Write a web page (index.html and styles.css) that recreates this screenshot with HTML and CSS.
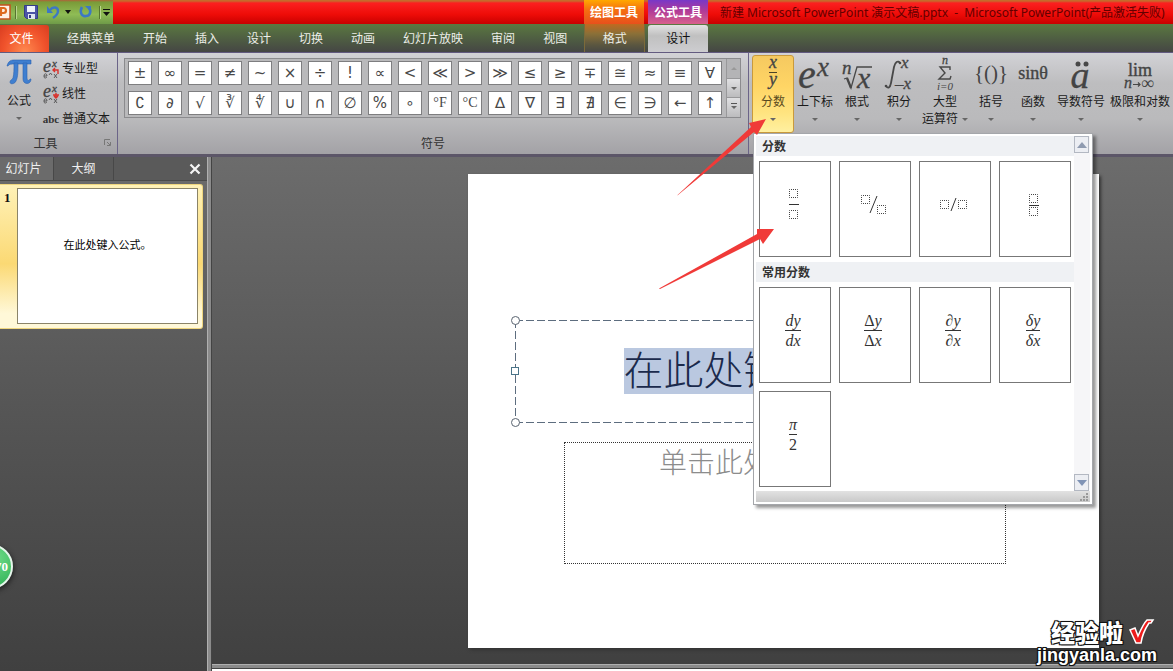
FILE: index.html
```
<!DOCTYPE html>
<html lang="zh-CN">
<head>
<meta charset="utf-8">
<title>新建 Microsoft PowerPoint 演示文稿.pptx</title>
<link rel="stylesheet" href="styles.css">
</head>
<body>
<header class="titlebar">
  <div class="quick">
    <svg class="app-logo" width="12" height="18" viewBox="0 0 12 18"><rect x="-6" y="2" width="16" height="14" fill="#fdf0e4" stroke="#c4501c" stroke-width="1.5"/><path d="M1 13V5h2.500a2.300 2.300 0 0 1 0 5H1" fill="none" stroke="#dd6a1e" stroke-width="2.200"/></svg>
    <span class="divider"></span>
    <button class="icon-btn save" aria-label="保存"><svg width="14" height="14" viewBox="0 0 14 14"><path d="M0.500 0.500h13v13h-11l-2-2z" fill="#4c55a8" stroke="#343c87"/><rect x="3" y="1" width="8" height="6" fill="#eef3fb"/><rect x="4" y="9" width="7" height="5" fill="#dfe6f2"/><rect x="5" y="10" width="2" height="3" fill="#343c87"/></svg></button>
    <button class="icon-btn undo" aria-label="撤消"><svg width="13" height="14" viewBox="0 0 13 14"><path d="M3 5C6 1 11 2 11 6c0 3-2 5-5 7" fill="none" stroke="#3d78c4" stroke-width="2.400"/><path d="M0 1v7h6z" fill="#3d78c4"/></svg></button>
    <svg class="undo-more" width="6" height="4" viewBox="0 0 6 4"><path d="M0 0h6L3 4z" fill="#111"/></svg>
    <button class="icon-btn redo" aria-label="重复"><svg width="13" height="14" viewBox="0 0 13 14"><path d="M3 2c-3 5 0 10 4 9 5 0 5-6 3-8" fill="none" stroke="#3d78c4" stroke-width="2.600"/><path d="M6 1h6v6z" fill="#3d78c4"/></svg></button>
    <span class="divider"></span>
    <button class="icon-btn more" aria-label="自定义快速访问工具栏"><svg width="7" height="7" viewBox="0 0 7 7"><path d="M0 .5h7" stroke="#111"/><path d="M0 3h7L3.500 7z" fill="#111"/></svg></button>
  </div>
  <div class="context drawing">绘图工具</div>
  <div class="context formula">公式工具</div>
  <div class="doc-title">新建 Microsoft PowerPoint 演示文稿.pptx  -  Microsoft PowerPoint(产品激活失败)</div>
</header>
<nav class="tabs">
  <button class="file">文件</button>
  <button>经典菜单</button><button>开始</button><button>插入</button><button>设计</button><button>切换</button><button>动画</button><button>幻灯片放映</button><button>审阅</button><button>视图</button>
  <button class="format">格式</button>
  <button class="current">设计</button>
</nav>
<section class="ribbon">
  <div class="group tools">
    <div class="tools-body">
      <button class="pi-btn"><svg width="28" height="30" viewBox="0 0 28 30"><path d="M2 9C3 5 5 3 9 3h17v4H10C6 7 4 7 3 9z" fill="#3f7fd0" stroke="#2b62ae" stroke-width=".6"/><path d="M9 6h4c0 8 0 14-2 18-1 3-6 4-6 1 0-2 2-2 3-4 1-4 1-9 1-15zM18 6h4v15c0 3 2 3 3 1h1c0 6-8 6-8 0z" fill="#3f7fd0" stroke="#2b62ae" stroke-width=".6"/></svg><span>公式</span><i class="caret"></i></button>
      <div class="modes">
        <button><svg width="18" height="20" viewBox="0 0 18 20"><text class="math" x="1" y="13" font-size="18">e</text><text class="math" x="10" y="8" font-size="11">x</text><path d="M2 17h3c0-3-3-3-3 0s2 2 3 1M7 16l1.500-2 1.500 2M12 15l3 4M15 15l-3 4" fill="none" stroke="#444" stroke-width=".8"/><path d="M16 15V11h-5m2-2l-2 2 2 2" fill="none" stroke="#d8322c" stroke-width="1.400"/></svg><span>专业型</span></button>
        <button><svg width="18" height="20" viewBox="0 0 18 20"><text class="math" x="1" y="13" font-size="18">e</text><text class="math" x="10" y="8" font-size="11">x</text><path d="M2 17h3c0-3-3-3-3 0s2 2 3 1M7 16l1.500-2 1.500 2M12 15l3 4M15 15l-3 4" fill="none" stroke="#444" stroke-width=".8"/><path d="M11 11h6m-3-2v5m-2-2l2 2 2-2" fill="none" stroke="#d8322c" stroke-width="1.400"/></svg><span>线性</span></button>
        <button><b class="abc">abc</b><span>普通文本</span></button>
      </div>
    </div>
    <div class="group-label">工具</div>
    <svg class="launcher" width="7" height="7" viewBox="0 0 7 7"><path d="M.5 6V.5H6M3 3l3 3M6.500 3v3.500H3" fill="none" stroke="#777"/></svg>
  </div>
  <div class="group symbols">
    <div class="gallery">
      <div class="symbol-grid">
        <button>±</button><button>∞</button><button>=</button><button>≠</button><button>~</button><button>×</button><button>÷</button><button>!</button><button>∝</button><button>&lt;</button><button>≪</button><button>&gt;</button><button>≫</button><button>≤</button><button>≥</button><button>∓</button><button>≅</button><button>≈</button><button>≡</button><button>∀</button>
        <button>∁</button><button>∂</button><button>√</button><button>∛</button><button>∜</button><button>∪</button><button>∩</button><button>∅</button><button>%</button><button>∘</button><button class="unit">°F</button><button class="unit">°C</button><button>∆</button><button>∇</button><button>∃</button><button>∄</button><button>∈</button><button>∋</button><button>←</button><button>↑</button>
      </div>
      <div class="gallery-nav">
        <button aria-label="上一行" disabled><i class="caret up"></i></button><button aria-label="下一行"><i class="caret"></i></button><button class="expand" aria-label="更多"><i class="caret"></i></button>
      </div>
    </div>
    <div class="group-label">符号</div>
  </div>
  <div class="group structures">
    <div class="structure open">
      <button><svg width="38" height="34" viewBox="0 0 38 34"><text class="math" x="19" y="9" font-size="18" text-anchor="middle">x</text><path d="M15 13.500h8" stroke="#4a4327"/><text class="math" x="19" y="26" font-size="18" text-anchor="middle">y</text></svg><span>分数</span><i class="caret"></i></button>
      <div class="menu">
        <div class="menu-main">
          <div class="menu-list">
            <h3>分数</h3>
            <div class="tiles">
              <button aria-label="分数（竖式）"><svg width="30" height="36" viewBox="0 0 30 36"><g class="slot"><rect x="11.500" y="3.500" width="8" height="8"/><rect x="11.500" y="24.500" width="8" height="8"/></g><path d="M11 18.500h10" class="bar"/></svg></button>
              <button aria-label="分数（斜式）"><svg width="30" height="36" viewBox="0 0 30 36"><g class="slot"><rect x="3.500" y="9.500" width="8" height="8"/><rect x="19.500" y="19.500" width="8" height="8"/></g><path d="M12 27l7-17" class="bar"/></svg></button>
              <button aria-label="分数（线性）"><svg width="30" height="36" viewBox="0 0 30 36"><g class="slot"><rect x="2.500" y="14.500" width="8" height="8"/><rect x="20.500" y="14.500" width="8" height="8"/></g><path d="M13 25l5-13" class="bar"/></svg></button>
              <button aria-label="分数（小型）"><svg width="30" height="36" viewBox="0 0 30 36"><g class="slot"><rect x="11.500" y="8.500" width="8" height="8"/><rect x="11.500" y="21.500" width="8" height="8"/></g><path d="M11 19.500h10" class="bar"/></svg></button>
            </div>
            <h3>常用分数</h3>
            <div class="tiles">
              <button><span class="frac"><i>dy</i><i>dx</i></span></button>
              <button><span class="frac"><i><b>Δ</b>y</i><i><b>Δ</b>x</i></span></button>
              <button><span class="frac"><i>∂y</i><i>∂x</i></span></button>
              <button><span class="frac"><i>δy</i><i>δx</i></span></button>
              <button><span class="frac"><i>π</i><i><b>2</b></i></span></button>
            </div>
          </div>
          <div class="scroll">
            <button aria-label="向上滚动"><svg width="10" height="6" viewBox="0 0 10 6"><path d="M0 6l5-6 5 6z" fill="#8f9bb0"/></svg></button>
            <button aria-label="向下滚动"><svg width="10" height="6" viewBox="0 0 10 6"><path d="M0 0l5 6 5-6z" fill="#7f93b5"/></svg></button>
          </div>
        </div>
        <div class="grip"><svg width="8" height="8" viewBox="0 0 8 8"><path d="M6 0h2v2H6zM3 3h2v2H3zM6 3h2v2H6zM0 6h2v2H0zM3 6h2v2H3zM6 6h2v2H6z" fill="#999"/></svg></div>
      </div>
    </div>
    <div class="structure"><button><svg width="38" height="34" viewBox="0 0 38 34"><text class="math" x="2" y="29" font-size="40">e</text><text class="math" x="21" y="17" font-size="27">x</text></svg><span>上下标</span><i class="caret"></i></button></div>
    <div class="structure"><button><svg width="38" height="34" viewBox="0 0 38 34"><text class="math" x="4" y="15" font-size="19">n</text><path d="M6 20l3-1 4 10 6-21h15" fill="none" stroke="#484848" stroke-width="1.300"/><path d="M9 19l4 10" stroke="#484848" stroke-width="2.200"/><text class="math" x="19" y="29" font-size="30">x</text></svg><span>根式</span><i class="caret"></i></button></div>
    <div class="structure"><button><svg width="38" height="34" viewBox="0 0 38 34"><path d="M20 4c-2-3-5-1-6 4l-3 16c-1 5-3 6-5 3" fill="none" stroke="#484848" stroke-width="1.800"/><circle cx="20" cy="4" r="1.300" fill="#484848"/><circle cx="6" cy="27" r="1.300" fill="#484848"/><text class="math" x="21" y="9" font-size="17">x</text><text class="math" x="15" y="30" font-size="17">–x</text></svg><span>积分</span><i class="caret"></i></button></div>
    <div class="structure large"><button><svg width="38" height="34" viewBox="0 0 38 34"><text class="math" x="19" y="5" font-size="12" text-anchor="middle">n</text><path d="M24 11V8H14l5 6-6 6h11l1-3" fill="none" stroke="#484848" stroke-width="1.400"/><text class="math light" x="19" y="31" font-size="11" text-anchor="middle">i=0</text></svg><span>大型</span><span class="with-caret">运算符<i class="caret"></i></span></button></div>
    <div class="structure"><button><svg width="38" height="34" viewBox="0 0 38 34"><text class="roman light" x="19" y="21" font-size="21" text-anchor="middle">{()}</text></svg><span>括号</span><i class="caret"></i></button></div>
    <div class="structure"><button><svg width="38" height="34" viewBox="0 0 38 34"><text class="roman" x="19" y="20" font-size="18" text-anchor="middle">sinθ</text></svg><span>函数</span><i class="caret"></i></button></div>
    <div class="structure accent"><button><svg width="38" height="34" viewBox="0 0 38 34"><text class="math" x="18" y="29" font-size="38" text-anchor="middle">a</text><circle cx="16" cy="5" r="2.500" fill="#484848"/><circle cx="24" cy="5" r="2.500" fill="#484848"/></svg><span>导数符号</span><i class="caret"></i></button></div>
    <div class="structure limit"><button><svg width="38" height="34" viewBox="0 0 38 34"><text class="roman" x="19" y="17" font-size="18" text-anchor="middle">lim</text><text class="math" x="3" y="29" font-size="16">n</text><path d="M12 25.500h7m-2-2l2 2-2 2" fill="none" stroke="#484848" stroke-width="1.200"/><text class="roman light" x="20" y="30" font-size="18">∞</text></svg><span>极限和对数</span><i class="caret"></i></button></div>
  </div>
</section>
<main class="workspace">
  <aside class="pane">
    <div class="pane-tabs"><button class="active">幻灯片</button><button>大纲</button><button class="close" aria-label="关闭"><svg width="10" height="10" viewBox="0 0 10 10"><path d="M0.500 0.500l9 9M9.500 0.500l-9 9" stroke="#f4f4f4" stroke-width="2.200"/></svg></button></div>
    <div class="thumb"><span class="num">1</span><div class="mini">在此处键入公式。</div></div>
  </aside>
  <div class="splitter"></div>
  <section class="stage">
    <div class="canvas">
      <article class="slide">
        <div class="title-box">
          <span class="handle tl"></span><span class="handle ml"></span><span class="handle bl"></span>
          <span class="selected">在此处键入公式。</span>
        </div>
        <div class="sub-box">单击此处添加副标题</div>
      </article>
    </div>
    <div class="notes-splitter"></div>
    <div class="notes"></div>
  </section>
</main>
<svg class="arrows" width="130" height="180" viewBox="0 0 130 180"><path d="M22 80.500L96 12l-2-4 17-4-9 16-3-3L23 80zM4 173.500L102 119v-5l17 0-11 15-3-5L5 174z" fill="#f03a38"/></svg>
<div class="ball">70</div>
<div class="watermark"><div class="brand">经验啦<svg width="26" height="26" viewBox="0 0 26 26"><path d="M2 11l5-2 3 8c3-7 6-13 9-16h6l-2 3h-2c-4 6-7 13-8 20H8z" fill="#ee1c1c" stroke="#fff" stroke-width="1.500"/></svg></div><div class="domain">jingyanla.com</div></div>
</body>
</html>
```

FILE: styles.css
```
* { box-sizing: border-box; }
body {
  margin: 0; height: 100vh; overflow: hidden; position: relative;
  display: flex; flex-direction: column;
  font: 12px/16px "Open Sans", "Noto Sans CJK SC", sans-serif;
  color: #1a1a1a; background: #555;
}
button { font: inherit; color: inherit; border: 0; padding: 0; margin: 0; background: none; }
svg { display: block; flex: none; overflow: visible; }

.titlebar {
  height: 24px; flex: none; display: flex; white-space: nowrap; overflow: hidden;
  background: linear-gradient(#c66a2c 0, #c66a2c 1px, #fb2020 3px, #ee0c08 60%, #c80000);
}
.quick {
  width: 113px; margin-right: 471px; flex: none; display: flex; align-items: center;
  background: linear-gradient(#b0603a 0, #7a9a38 2px, #8fbc55 60%, #6e9a48);
}
.divider { width: 1px; height: 13px; background: #56752f; box-shadow: 1px 0 #b9d58c; margin-left: 3px; }
.save { margin-left: 8px; }
.undo { margin-left: 9px; }
.undo-more { margin: 0 8px 0 5px; }
.more { margin-left: 3px; }
.redo { margin-right: 4px; }
.context {
  width: 60px; margin-right: 4px; flex: none; text-align: center;
  font-weight: bold; line-height: 26px; color: #fff;
}
.drawing { background: linear-gradient(#ffa800, #f57010 40%, #e8501c); }
.formula { background: linear-gradient(#7838c8, #b03a98 45%, #d8608c); }
.doc-title { padding-left: 8px; line-height: 26px; color: #640000; white-space: pre; font-family: "Noto Sans", "Noto Sans CJK SC", sans-serif; }

.tabs {
  height: 28px; flex: none; display: flex; color: #eceee8;
  background: linear-gradient(#5b7840, #4f5f42 50%, #454644);
}
.tabs button { padding: 2px 14px 0; white-space: nowrap; }
.tabs .file {
  width: 49px; margin: 1px 4px 0 0; padding: 1px 6px 0 0; color: #fff; border-radius: 0 3px 0 0;
  background: radial-gradient(ellipse at 50% 100%, #ff8a50, #f0532c 60%, #d83c20);
}
.tabs .format { width: 61px; margin: 0 3px; border: solid #7c6a3a; border-width: 0 1px; background: linear-gradient(#c06a20, #8a7038 35%, #5a5640 75%, #484844); }
.tabs .current { width: 60px; margin: 1px 0 0; padding-top: 1px; color: #111; background: linear-gradient(#e2e2e2, #c0c0c0 40%, #cdcdd0); border-radius: 3px 3px 0 0; }

.ribbon {
  height: 105px; flex: none; display: flex; position: relative; z-index: 2;
  border-top: 1px solid #625a80; border-bottom: 3px solid #5c5668;
  background: linear-gradient(#d2d2d6, #bdbdbf 30%, #bababc 65%, #a3a2a6);
}
.group { position: relative; flex: none; border-right: 1px solid #6b6488; display: flex; flex-direction: column; }
.group-label { margin-top: auto; padding-bottom: 2px; text-align: center; color: #333; }
.caret { display: block; width: 0; height: 0; border: 3px solid transparent; border-top-color: #666; border-bottom: 0; }
.caret.up { border-top: 0; border-bottom: 3px solid #999; }

.tools { width: 118px; }
.tools .group-label { padding-right: 26px; }
.tools-body { display: flex; padding-top: 4px; }
.pi-btn { width: 38px; display: flex; flex-direction: column; align-items: center; }
.pi-btn span { margin: 6px 0 8px; }
.modes { display: flex; flex-direction: column; gap: 1px; padding-left: 4px; }
.modes button { height: 24px; display: flex; align-items: center; gap: 2px; white-space: nowrap; }
.abc { width: 18px; font: bold 11px/16px "Liberation Serif", serif; color: #333; }
.launcher { position: absolute; right: 6px; bottom: 8px; }
.math { font-family: "Liberation Serif", serif; font-style: italic; fill: #444; stroke: #444; stroke-width: .3; }
.roman { font-family: "Liberation Serif", serif; fill: #444; stroke: #444; stroke-width: .4; }
.light { stroke: none; }

.symbols { width: 631px; }
.gallery { margin: 5px 7px 0 6px; height: 60px; display: flex; border: 1px solid #8b8b8e; background: #b9b9bb; }
.symbol-grid { flex: 1; display: grid; grid-template-columns: repeat(20, 24px); gap: 6px; padding: 2px 3px; }
.symbol-grid button {
  width: 24px; height: 24px; border: 1px solid #7e7e80; background: #fff; color: #484848;
  font: 15px/20px "DejaVu Sans", sans-serif;
}
.symbol-grid .unit { font-size: 14px; font-family: "Liberation Serif", serif; }
.gallery-nav { width: 14px; display: flex; flex-direction: column; border-left: 1px solid #98989a; }
.gallery-nav button { flex: 1; display: flex; align-items: center; justify-content: center; background: linear-gradient(#e0e0e2, #bcbcbe); border-bottom: 1px solid #98989a; }
.gallery-nav button:disabled { background: #b4b4b6; }
.gallery-nav .expand { border-bottom: 0; }
.expand .caret { position: relative; }
.expand .caret::before { content: ""; position: absolute; left: -3px; top: -6px; width: 6px; height: 1px; background: #555; }

.structures { flex-direction: row; padding: 2px 0 0 3px; border: 0; }
.structure { position: relative; width: 42px; }
.structure.large { width: 50px; }
.structure.accent { width: 54px; }
.structure.limit { width: 64px; }
.structure > button { width: 100%; height: 78px; padding-top: 3px; display: flex; flex-direction: column; align-items: center; white-space: nowrap; border: 1px solid transparent; }
.structure > button > span { margin-top: 1px; }
.structure > button > .caret { margin-top: 8px; }
.structure > button > .with-caret { display: flex; align-items: center; gap: 4px; }
.structure.open > button { border-color: #c99a3c; border-radius: 3px; background: linear-gradient(#f5c960, #ffd565 40%, #ffe480 75%, #fff0a0); color: #5a4a20; }

.menu {
  position: absolute; left: 1px; top: 78px; width: 340px; padding: 2px;
  background: #fff; border: 1px solid #a4a6aa; box-shadow: 3px 3px 3px rgba(0, 0, 0, .4);
}
.menu-main { display: flex; }
.menu-list { flex: 1; padding-bottom: 4px; }
.menu h3 { margin: 0; padding-left: 6px; height: 20px; font-size: 12px; line-height: 21px; color: #333; background: #eff1f4; }
.tiles { display: grid; grid-template-columns: repeat(4, 72px); gap: 8px; padding: 5px 3px; }
.tiles:last-child { padding-bottom: 0; }
.tiles button { height: 96px; border: 1px solid #777; background: #fff; display: flex; align-items: center; justify-content: center; padding: 0 4px 10px 0; }
.slot rect { fill: none; stroke: #444; stroke-dasharray: 1 1; stroke-dashoffset: .5; }
.bar { stroke: #333; fill: none; }
.frac { display: flex; flex-direction: column; font: 16px/19px "Liberation Serif", serif; color: #333; }
.frac i:first-child { border-bottom: 1px solid #333; }
.frac b { font-weight: normal; font-style: normal; }
.scroll { width: 17px; display: flex; flex-direction: column; justify-content: space-between; background: #f6f6f8; }
.scroll button { height: 17px; width: 15px; border: 1px solid #b3b8c2; background: #eceef3; display: flex; align-items: center; justify-content: center; }
.grip { height: 11px; display: flex; align-items: center; justify-content: flex-end; padding-right: 2px; background: linear-gradient(#e2e2e2, #c9c9c9); }

.workspace { flex: 1; min-height: 0; display: flex; background: linear-gradient(#6c6c6c, #555 50%, #404040); }
.pane { width: 207px; flex: none; }
.pane-tabs { height: 24px; display: flex; color: #f0f0f0; border-bottom: 1px solid #4a4a4a; background: #5a5a5a; }
.pane-tabs button { width: 60px; border-right: 1px solid #484848; }
.pane-tabs .active { width: 54px; padding-right: 6px; background: #6b6b6b; }
.pane-tabs .close { width: auto; margin-left: auto; padding-right: 7px; border: 0; }
.thumb {
  margin: 3px 4px 0 0; height: 145px; display: flex; padding: 3px 4px 4px; border: 1px solid #efd67e; border-left: 0; border-radius: 0 3px 3px 0;
  background: linear-gradient(#fff2b8, #fbd974 55%, #fff8d8 90%);
}
.num { width: 13px; font: bold 13px/20px "Liberation Serif", "DejaVu Serif", serif; color: #111; }
.mini { flex: 1; background: #fff; border: 1px solid #8b8468; text-align: center; font-size: 11px; line-height: 112px; color: #000; }
.splitter { width: 5px; flex: none; background: #8b8b8b; border-left: 1px solid #b0b0b0; border-right: 1px solid #444; }
.stage { flex: 1; min-width: 0; display: flex; flex-direction: column; }
.canvas { flex: 1; min-height: 0; display: flex; padding: 17px 74px 16px 256px; }
.slide { flex: 1; background: #fff; padding-top: 146px; box-shadow: 2px 2px 3px #333; font-weight: 300; }
.title-box {
  position: relative; margin: 0 47px; height: 103px; text-align: center; padding-top: 28px;
  background:
    repeating-linear-gradient(90deg, #5d6d7f 0 8px, transparent 8px 11px) top / 100% 1px no-repeat,
    repeating-linear-gradient(90deg, #5d6d7f 0 8px, transparent 8px 11px) bottom / 100% 1px no-repeat,
    repeating-linear-gradient(#5d6d7f 0 8px, transparent 8px 11px) left / 1px 100% no-repeat,
    repeating-linear-gradient(#5d6d7f 0 8px, transparent 8px 11px) right / 1px 100% no-repeat;
}
.selected { display: inline-block; font-size: 40px; line-height: 40px; padding-bottom: 6px; color: #1b2a4c; background: #bac8e0; white-space: nowrap; font-family: "Noto Sans CJK SC", sans-serif; }
.handle { position: absolute; width: 9px; height: 9px; left: -4px; background: #fff; border: 1px solid #5a6470; border-radius: 50%; }
.tl { top: -4px; }
.bl { bottom: -4px; }
.ml { top: 47px; width: 8px; height: 8px; border-radius: 0; border-color: #4a7488; }
.sub-box { margin: 19px 93px 0 96px; height: 122px; border: 1px dotted #333; text-align: center; font: 300 28px/36px "Noto Sans CJK SC", sans-serif; color: #8c8c8c; }
.notes-splitter { height: 5px; flex: none; background: #8b8b8b; border-top: 1px solid #b0b0b0; border-bottom: 1px solid #444; }
.notes { height: 2px; flex: none; background: #fff; }

.arrows { position: absolute; left: 655px; top: 115px; z-index: 3; }
.ball {
  position: absolute; left: -32px; top: 544px; width: 45px; height: 45px; border: 2px solid #e4f6ea; border-radius: 50%;
  background: radial-gradient(circle at 60% 30%, #6fdc88, #22a84c); box-shadow: 1px 2px 5px #222;
  color: #fff; text-align: right; font: bold 13px/41px "Liberation Serif", serif; padding-right: 3px;
}
.watermark { position: absolute; right: 16px; bottom: 6px; z-index: 4; color: #fff; text-align: right; text-shadow: 1px 1px #111, -1px 1px #111, 1px -1px #111, -1px -1px #111, 0 0 2px #000; }
.brand { display: flex; align-items: center; justify-content: flex-end; gap: 5px; padding-right: 3px; font: 900 24px/26px "Noto Sans CJK SC", sans-serif; }
.domain { font: bold 18px/20px "Liberation Sans", sans-serif; }
```
